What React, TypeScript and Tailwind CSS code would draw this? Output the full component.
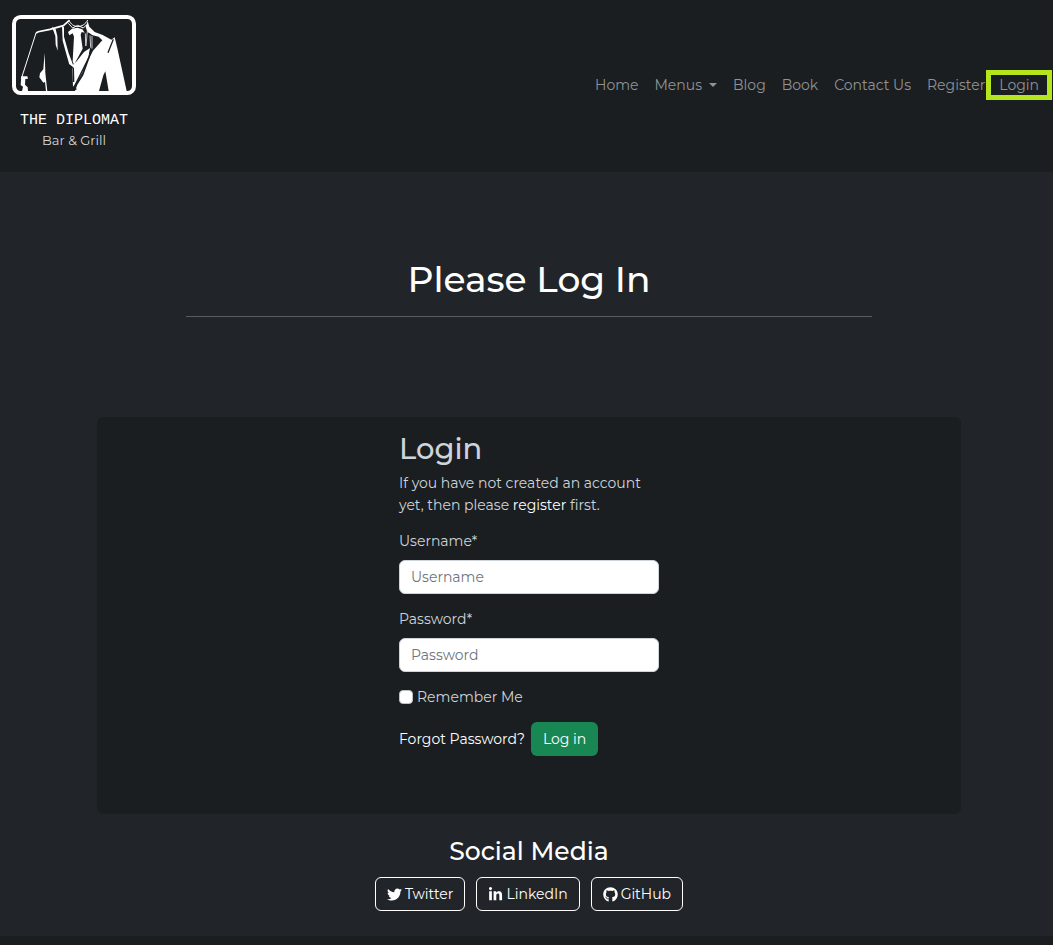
import React from "react";
import { FaTwitter, FaLinkedinIn, FaGithub } from "react-icons/fa";

function Logo() {
  return (
    <svg viewBox="36 45 372 240" className="h-20 w-31" aria-label="The Diplomat" role="img">
      <rect x="42" y="51" width="360" height="228" rx="20" fill="none" stroke="#fff" strokeWidth="12" />
      <path d="M64 236L108 99" fill="none" stroke="#fff" strokeWidth="3" />
      <path d="M108 99L115 95L150 88L190 77L208 61" fill="none" stroke="#fff" strokeWidth="5" />
      <g fill="#fff">
        <path d="M156 80L167 88L172 108L173 152L167 134L166 108Z" />
        <path d="M134 158L136 218L138 238L142 274L138 274L135 246L130 248L118 232L120 220L130 208Z" />
        <path d="M64 229L82 229L84 236L76 237L75 254L83 262L84 274L66 274L69 260L62 255Z" />
        <path d="M186 78L192 82L192 110L206 160L214 181L219 194L230 184L252 156L270 144L266 168L246 220L228 250L219 260L217 200L208 194L199 162L188 122Z" />
        <path d="M204 96L216 86L232 83L247 88L254 98L245 96L242 104L248 146L222 194L218 184L222 110L218 100L208 106Z" />
        <path d="M263 64L268 80L284 96L308 105L334 119L344 112L352 145L380 273L326 273L316 214L310 226L297 273L225 273L232 254L250 226L270 170L279 152L307 121L296 110L278 106L262 96L257 80Z" />
      </g>
      <path d="M207 60C216 86 250 86 263 60M205 70L218 84L233 76L250 84L260 74" fill="none" stroke="#fff" strokeWidth="3" />
      <g fill="none" stroke="#1a1e21" strokeWidth="4">
        <path d="M268 99L262 128M340 118L324 158M274 142L267 172L240 226L224 258" />
        <path d="M207 194L220 205L221 246" />
      </g>
      <path d="M256 100L257 138M262 92L258 138M270 106L272 143M276 108L276 146" fill="none" stroke="#c8c9ca" strokeWidth="3" />
      <ellipse cx="225" cy="267" rx="5" ry="3" fill="#1a1e21" />
    </svg>
  );
}

const field =
  "mt-2 block w-full rounded-md border border-[#ced4da] bg-white px-[11px] py-[5px] text-black placeholder:text-[#6c757d]";

const links = ["Blog", "Book", "Contact Us", "Register"];
const socials = [
  { name: "Twitter", Icon: FaTwitter },
  { name: "LinkedIn", Icon: FaLinkedinIn },
  { name: "GitHub", Icon: FaGithub },
];

export default function App() {
  return (
    <div className="min-h-screen bg-[#212529] font-['Montserrat','Inter',sans-serif] text-[14px] leading-[22px] text-[#ced4da]">
      <header className="flex items-center justify-between bg-[#1a1e21] pt-[15px] pr-px pb-[17px] pl-3">
        <a href="#" className="flex flex-col items-center pb-[5px]">
          <Logo />
          <span className="mt-[18px] font-['Liberation_Mono',monospace] text-[15px] leading-4 text-white">THE DIPLOMAT</span>
          <span className="mt-px text-[13px] leading-5 text-[#d5d6d7]">Bar &amp; Grill</span>
        </a>
        <div className="flex items-center text-[#919395]">
          <nav className="flex items-center gap-4 pr-px">
            <a href="#">Home</a>
            <button className="flex items-center gap-[7px]">
              Menus
              <svg viewBox="0 0 8 4" className="h-1 w-2" fill="currentColor" aria-hidden="true">
                <path d="M0 0H8L4 4Z" />
              </svg>
            </button>
            {links.map((l) => (
              <a key={l} href="#">{l}</a>
            ))}
          </nav>
          <a href="#" className="border-[5px] border-[#b5e61d] px-2 leading-5">Login</a>
        </div>
      </header>
      <main className="pt-[85px] pr-[92px] pl-[97px]">
        <section className="mx-[89px] border-b border-[#595d60] pb-[15px] text-center">
          <h1 className="text-4xl leading-[44px] font-medium text-white">Please Log In</h1>
        </section>
        <section className="mt-[100px] rounded-md bg-[#1a1e21] pt-4 pb-[58px]">
          <form className="mx-auto w-[260px]" onSubmit={(e) => e.preventDefault()}>
            <h2 className="text-[29px] leading-8 font-medium">Login</h2>
            <p className="mt-[7px]">
              If you have not created an account yet, then please{" "}
              <a href="#" className="text-white">register</a> first.
            </p>
            <label htmlFor="username" className="mt-[14px] block">Username*</label>
            <input id="username" placeholder="Username" className={field} />
            <label htmlFor="password" className="mt-[14px] block">Password*</label>
            <input id="password" type="password" placeholder="Password" className={field} />
            <div className="mt-[14px] flex items-center gap-1">
              <input id="remember" type="checkbox" className="size-3.5 appearance-none rounded-sm border border-[#bfbfbf] bg-white" />
              <label htmlFor="remember">Remember Me</label>
            </div>
            <div className="mt-[14px] flex items-center gap-1.5">
              <a href="#" className="text-white">Forgot Password?</a>
              <button type="submit" className="rounded-md bg-[#198754] px-3 py-1.5 text-white">Log in</button>
            </div>
          </form>
        </section>
      </main>
      <footer className="text-center text-white">
        <div className="pt-[21px] pr-[92px] pl-[97px]">
          <h2 className="text-[25px] leading-8 font-medium">Social Media</h2>
          <div className="mt-[10px] flex justify-center gap-[11px] pb-[25px]">
            {socials.map(({ name, Icon }) => (
              <a key={name} href="#" className="flex items-center gap-[3px] rounded-md border border-white px-[11px] py-[5px]">
                <Icon className="size-[15px]" />
                {name}
              </a>
            ))}
          </div>
        </div>
        <div className="h-[9px] bg-[#1a1e21]" />
      </footer>
    </div>
  );
}
